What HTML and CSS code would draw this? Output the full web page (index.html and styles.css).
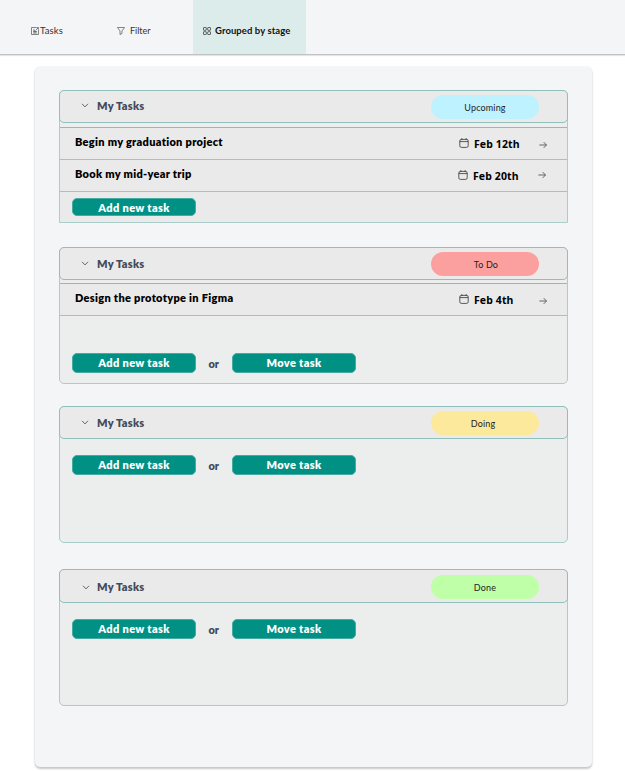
FILE: index.html
```html
<!DOCTYPE html>
<html lang="en">
<head>
<meta charset="utf-8">
<title>My Tasks</title>
<link rel="stylesheet" href="styles.css">
</head>
<body>
<svg class="defs" width="0" height="0" aria-hidden="true">
  <symbol id="chevron" viewBox="0 0 8 5"><path d="M1 .8 4 3.9 7 .8"/></symbol>
  <symbol id="calendar" viewBox="0 0 10 10"><rect x=".8" y="1.4" width="8.4" height="8" rx="1.6"/><path d="M.8 3.6h8.4M2.8 .2v1.9M7.2 .2v1.9"/></symbol>
  <symbol id="arrow" viewBox="0 0 8 8"><path d="M.4 4h7M4.7 1.1 7.5 4 4.7 6.9"/></symbol>
</svg>
<nav class="toolbar">
  <a class="tab tab-tasks"><svg class="icon" viewBox="0 0 8 8"><path d="M5 .5H.5v7h7V3M2 3h2M2 4.5h4M2 6h4M4 3v3M5.2.6h2.2v2.2M5 3 7.3.7"/></svg><span>Tasks</span></a>
  <a class="tab tab-filter"><svg class="icon" viewBox="0 0 8 8"><path d="M.4.5h7.2L5 3.9v2.5L3 7.5V3.9z"/></svg><span>Filter</span></a>
  <a class="tab tab-group"><svg class="icon" viewBox="0 0 8 8"><rect x=".5" y=".5" width="2.8" height="2.8" rx=".4"/><rect x="4.7" y=".5" width="2.8" height="2.8" rx=".4"/><rect x=".5" y="4.7" width="2.8" height="2.8" rx=".4"/><rect x="4.7" y="4.7" width="2.8" height="2.8" rx=".4"/></svg><span>Grouped by stage</span></a>
</nav>
<main class="board">
  <section class="stage stage-upcoming">
    <header class="stage-head"><svg class="chevron"><use href="#chevron"/></svg><h2>My Tasks</h2><span class="badge upcoming">Upcoming</span></header>
    <div class="rows">
      <div class="row"><span class="name">Begin my graduation project</span><svg class="calendar"><use href="#calendar"/></svg><time>Feb 12th</time><svg class="arrow"><use href="#arrow"/></svg></div>
      <div class="row second"><span class="name">Book my mid-year trip</span><svg class="calendar"><use href="#calendar"/></svg><time>Feb 20th</time><svg class="arrow"><use href="#arrow"/></svg></div>
      <div class="row last"><button class="compact">Add new task</button></div>
    </div>
  </section>
  <section class="stage stage-todo">
    <header class="stage-head"><svg class="chevron"><use href="#chevron"/></svg><h2>My Tasks</h2><span class="badge todo">To Do</span></header>
    <div class="rows">
      <div class="row"><span class="name">Design the prototype in Figma</span><svg class="calendar"><use href="#calendar"/></svg><time>Feb 4th</time><svg class="arrow"><use href="#arrow"/></svg></div>
    </div>
    <div class="actions"><button>Add new task</button><span class="or">or</span><button class="move">Move task</button></div>
  </section>
  <section class="stage stage-doing">
    <header class="stage-head"><svg class="chevron"><use href="#chevron"/></svg><h2>My Tasks</h2><span class="badge doing">Doing</span></header>
    <div class="actions"><button>Add new task</button><span class="or">or</span><button class="move">Move task</button></div>
  </section>
  <section class="stage stage-done">
    <header class="stage-head"><svg class="chevron"><use href="#chevron"/></svg><h2>My Tasks</h2><span class="badge done">Done</span></header>
    <div class="actions"><button>Add new task</button><span class="or">or</span><button class="move">Move task</button></div>
  </section>
</main>
</body>
</html>
```
FILE: styles.css
```css
* { box-sizing: border-box; }
body { margin: 0; height: 771px; overflow: hidden; background: #fff; font-family: Lato, "Open Sans", sans-serif; font-variant-ligatures: none; color: #000; }
svg { flex: none; fill: none; stroke: #444; stroke-width: .8; }
.defs { position: absolute; }
.toolbar { height: 55px; display: flex; background: #f3f5f7; border-bottom: 1.5px solid #c2c3c4; box-shadow: 0 1px 1px #e4e4e4; }
.tab { display: flex; align-items: center; padding-top: 8px; font-size: 9.5px; color: #333; white-space: nowrap; }
.tab span { margin-top: -2px; }
.icon { width: 8px; height: 8px; }
.tab-tasks { width: 117px; padding-left: 31px; gap: 1px; letter-spacing: .15px; }
.tab-tasks .icon, .tab-filter .icon { stroke-width: .65; }
.tab-filter { width: 76px; gap: 5px; }
.tab-filter span { font-size: 9px; }
.tab-group { width: 113px; padding-left: 10px; gap: 4px; background: #dcecea; color: #111; font-weight: 700; letter-spacing: .08px; }
.board { width: 557px; height: 700px; margin: 12px 0 0 35px; padding: 23px 24px; background: #f3f5f7; border-radius: 5px; box-shadow: 0 2px 2px #c6c9cb, 0 0 2px #dfe1e3; }
.stage { width: 509px; background: #ebeeed; border: 1px solid #a9cdc9; border-radius: 5px; }
.stage-upcoming { height: 133px; border-radius: 5px 5px 0 0; }
.stage-todo { height: 137px; margin-top: 24px; }
.stage-doing { height: 137px; margin-top: 22px; }
.stage-done { height: 137px; margin-top: 26px; }
.stage-head { display: flex; align-items: center; height: 33px; margin: -1px; padding: 0 28px 0 21px; background: #eaeaea; border: 1px solid #91bfbb; border-radius: 5px; }
.stage-todo .stage-head { padding-top: 1px; }
.stage-doing .stage-head { padding-top: 1px; }
.stage-done .stage-head { height: 34px; padding-left: 22px; padding-top: 1px; }
.stage-done h2 { margin-left: 7px; }
.chevron { width: 8px; height: 5px; margin-top: -2px; }
.stage-done .chevron { margin-top: 1px; }
h2 { margin: 0 auto 0 8px; font-size: 11px; line-height: 14px; font-weight: 800; color: #424b5b; letter-spacing: .25px; }
.stage-upcoming h2 { padding-bottom: 2px; }
.badge { width: 108px; height: 24px; border-radius: 12px; text-align: center; font-size: 9px; line-height: 25px; color: #222; letter-spacing: .15px; }
.upcoming { background: #bff2ff; }
.todo { padding-left: 2px; background: #fca09f; }
.doing { padding-right: 4px; background: #fde99b; }
.done { background: #bfffa8; }
.rows { margin-top: 5px; background: #eaeaea; border-top: 1px solid #8ebcb8; }
.stage-todo .rows { margin-top: 4px; }
.row { display: flex; align-items: center; height: 32px; padding: 0 20px 0 15px; border-bottom: 1px solid #9cc6c2; }
.row.last { height: 30px; padding-left: 12px; border: 0; }
.row.second { padding: 0 21px 1px 15px; }
.name { margin-right: auto; padding-bottom: 4px; font-size: 11px; font-weight: 800; letter-spacing: .3px; white-space: nowrap; }
.calendar { width: 10px; height: 10px; margin-top: -1px; stroke: #333; }
time { width: 62px; margin: 1px 3px 0 5px; font-family: "Noto Sans", sans-serif; font-size: 10.5px; font-weight: 700; letter-spacing: .1px; white-space: nowrap; }
.second time { margin-top: 2px; }
.arrow { width: 8px; height: 8px; margin-top: 3px; }
.second .arrow { margin-top: 0; }
.actions { display: flex; align-items: center; margin: 17px 0 0 12px; }
.stage-todo .actions { margin-top: 37px; }
button { width: 124px; height: 20px; padding: 0; border: 1px solid #45aaa1; border-radius: 5px; background: #009184; color: #fff; font: 800 11px/16px Lato, sans-serif; letter-spacing: .35px; }
button.move { padding-left: 1px; }
button.compact { height: 18px; line-height: 15px; }
.or { width: 35.5px; text-align: center; font-size: 11px; font-weight: 800; color: #424b5b; }
```
